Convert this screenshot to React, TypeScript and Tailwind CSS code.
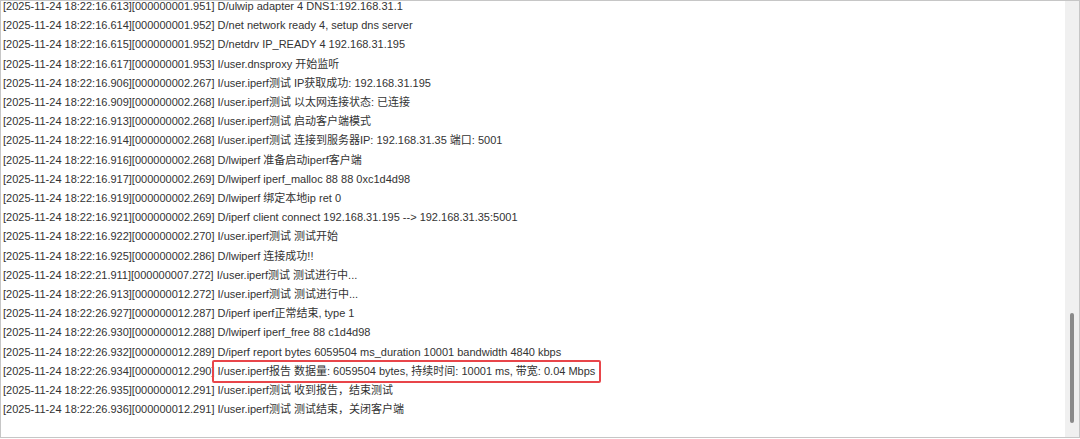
const lines: [string, string, string][] = [
  ["2025-11-24 18:22:16.613", "000000001.951", "D/ulwip adapter 4 DNS1:192.168.31.1"],
  ["2025-11-24 18:22:16.614", "000000001.952", "D/net network ready 4, setup dns server"],
  ["2025-11-24 18:22:16.615", "000000001.952", "D/netdrv IP_READY 4 192.168.31.195"],
  ["2025-11-24 18:22:16.617", "000000001.953", "I/user.dnsproxy 开始监听"],
  ["2025-11-24 18:22:16.906", "000000002.267", "I/user.iperf测试 IP获取成功: 192.168.31.195"],
  ["2025-11-24 18:22:16.909", "000000002.268", "I/user.iperf测试 以太网连接状态: 已连接"],
  ["2025-11-24 18:22:16.913", "000000002.268", "I/user.iperf测试 启动客户端模式"],
  ["2025-11-24 18:22:16.914", "000000002.268", "I/user.iperf测试 连接到服务器IP: 192.168.31.35 端口: 5001"],
  ["2025-11-24 18:22:16.916", "000000002.268", "D/lwiperf 准备启动iperf客户端"],
  ["2025-11-24 18:22:16.917", "000000002.269", "D/lwiperf iperf_malloc 88 88 0xc1d4d98"],
  ["2025-11-24 18:22:16.919", "000000002.269", "D/lwiperf 绑定本地ip ret 0"],
  ["2025-11-24 18:22:16.921", "000000002.269", "D/iperf client connect 192.168.31.195 --> 192.168.31.35:5001"],
  ["2025-11-24 18:22:16.922", "000000002.270", "I/user.iperf测试 测试开始"],
  ["2025-11-24 18:22:16.925", "000000002.286", "D/lwiperf 连接成功!!"],
  ["2025-11-24 18:22:21.911", "000000007.272", "I/user.iperf测试 测试进行中..."],
  ["2025-11-24 18:22:26.913", "000000012.272", "I/user.iperf测试 测试进行中..."],
  ["2025-11-24 18:22:26.927", "000000012.287", "D/iperf iperf正常结束, type 1"],
  ["2025-11-24 18:22:26.930", "000000012.288", "D/lwiperf iperf_free 88 c1d4d98"],
  ["2025-11-24 18:22:26.932", "000000012.289", "D/iperf report bytes 6059504 ms_duration 10001 bandwidth 4840 kbps"],
  ["2025-11-24 18:22:26.934", "000000012.290", "I/user.iperf报告 数据量: 6059504 bytes, 持续时间: 10001 ms, 带宽: 0.04 Mbps"],
  ["2025-11-24 18:22:26.935", "000000012.291", "I/user.iperf测试 收到报告，结束测试"],
  ["2025-11-24 18:22:26.936", "000000012.291", "I/user.iperf测试 测试结束，关闭客户端"],
];

export default function App() {
  return (
    <div className="w-[1080px] h-[439px] bg-white">
      <div className="flex h-[438px] border border-[#c6c6c6] overflow-hidden">
        {/* log output, scrolled so the first line is cut at the top */}
        <div className="flex-1 overflow-hidden pl-[2px]">
          <div
            className="-mt-[4px] text-[11px] leading-[19.2px] text-[#333] whitespace-nowrap"
            style={{ fontFamily: '"Liberation Sans", "Noto Sans CJK SC", sans-serif' }}
          >
            {lines.map(([time, tick, msg], i) => (
              <div key={i}>
                [{time}][{tick}]{" "}
                {i === 19 ? (
                  <span className="relative">
                    {msg}
                    <span className="absolute -left-[6px] -right-[6px] -top-[5px] -bottom-[6px] border-2 border-[#e8454a] rounded-[2px]"></span>
                  </span>
                ) : (
                  msg
                )}
              </div>
            ))}
          </div>
        </div>
        {/* scrollbar */}
        <div className="w-[14px] bg-[#f0f0f0] relative">
          <div className="absolute left-[5px] top-[312px] w-[4px] h-[110px] rounded-full bg-[#8a8a8a]"></div>
        </div>
      </div>
    </div>
  );
}
